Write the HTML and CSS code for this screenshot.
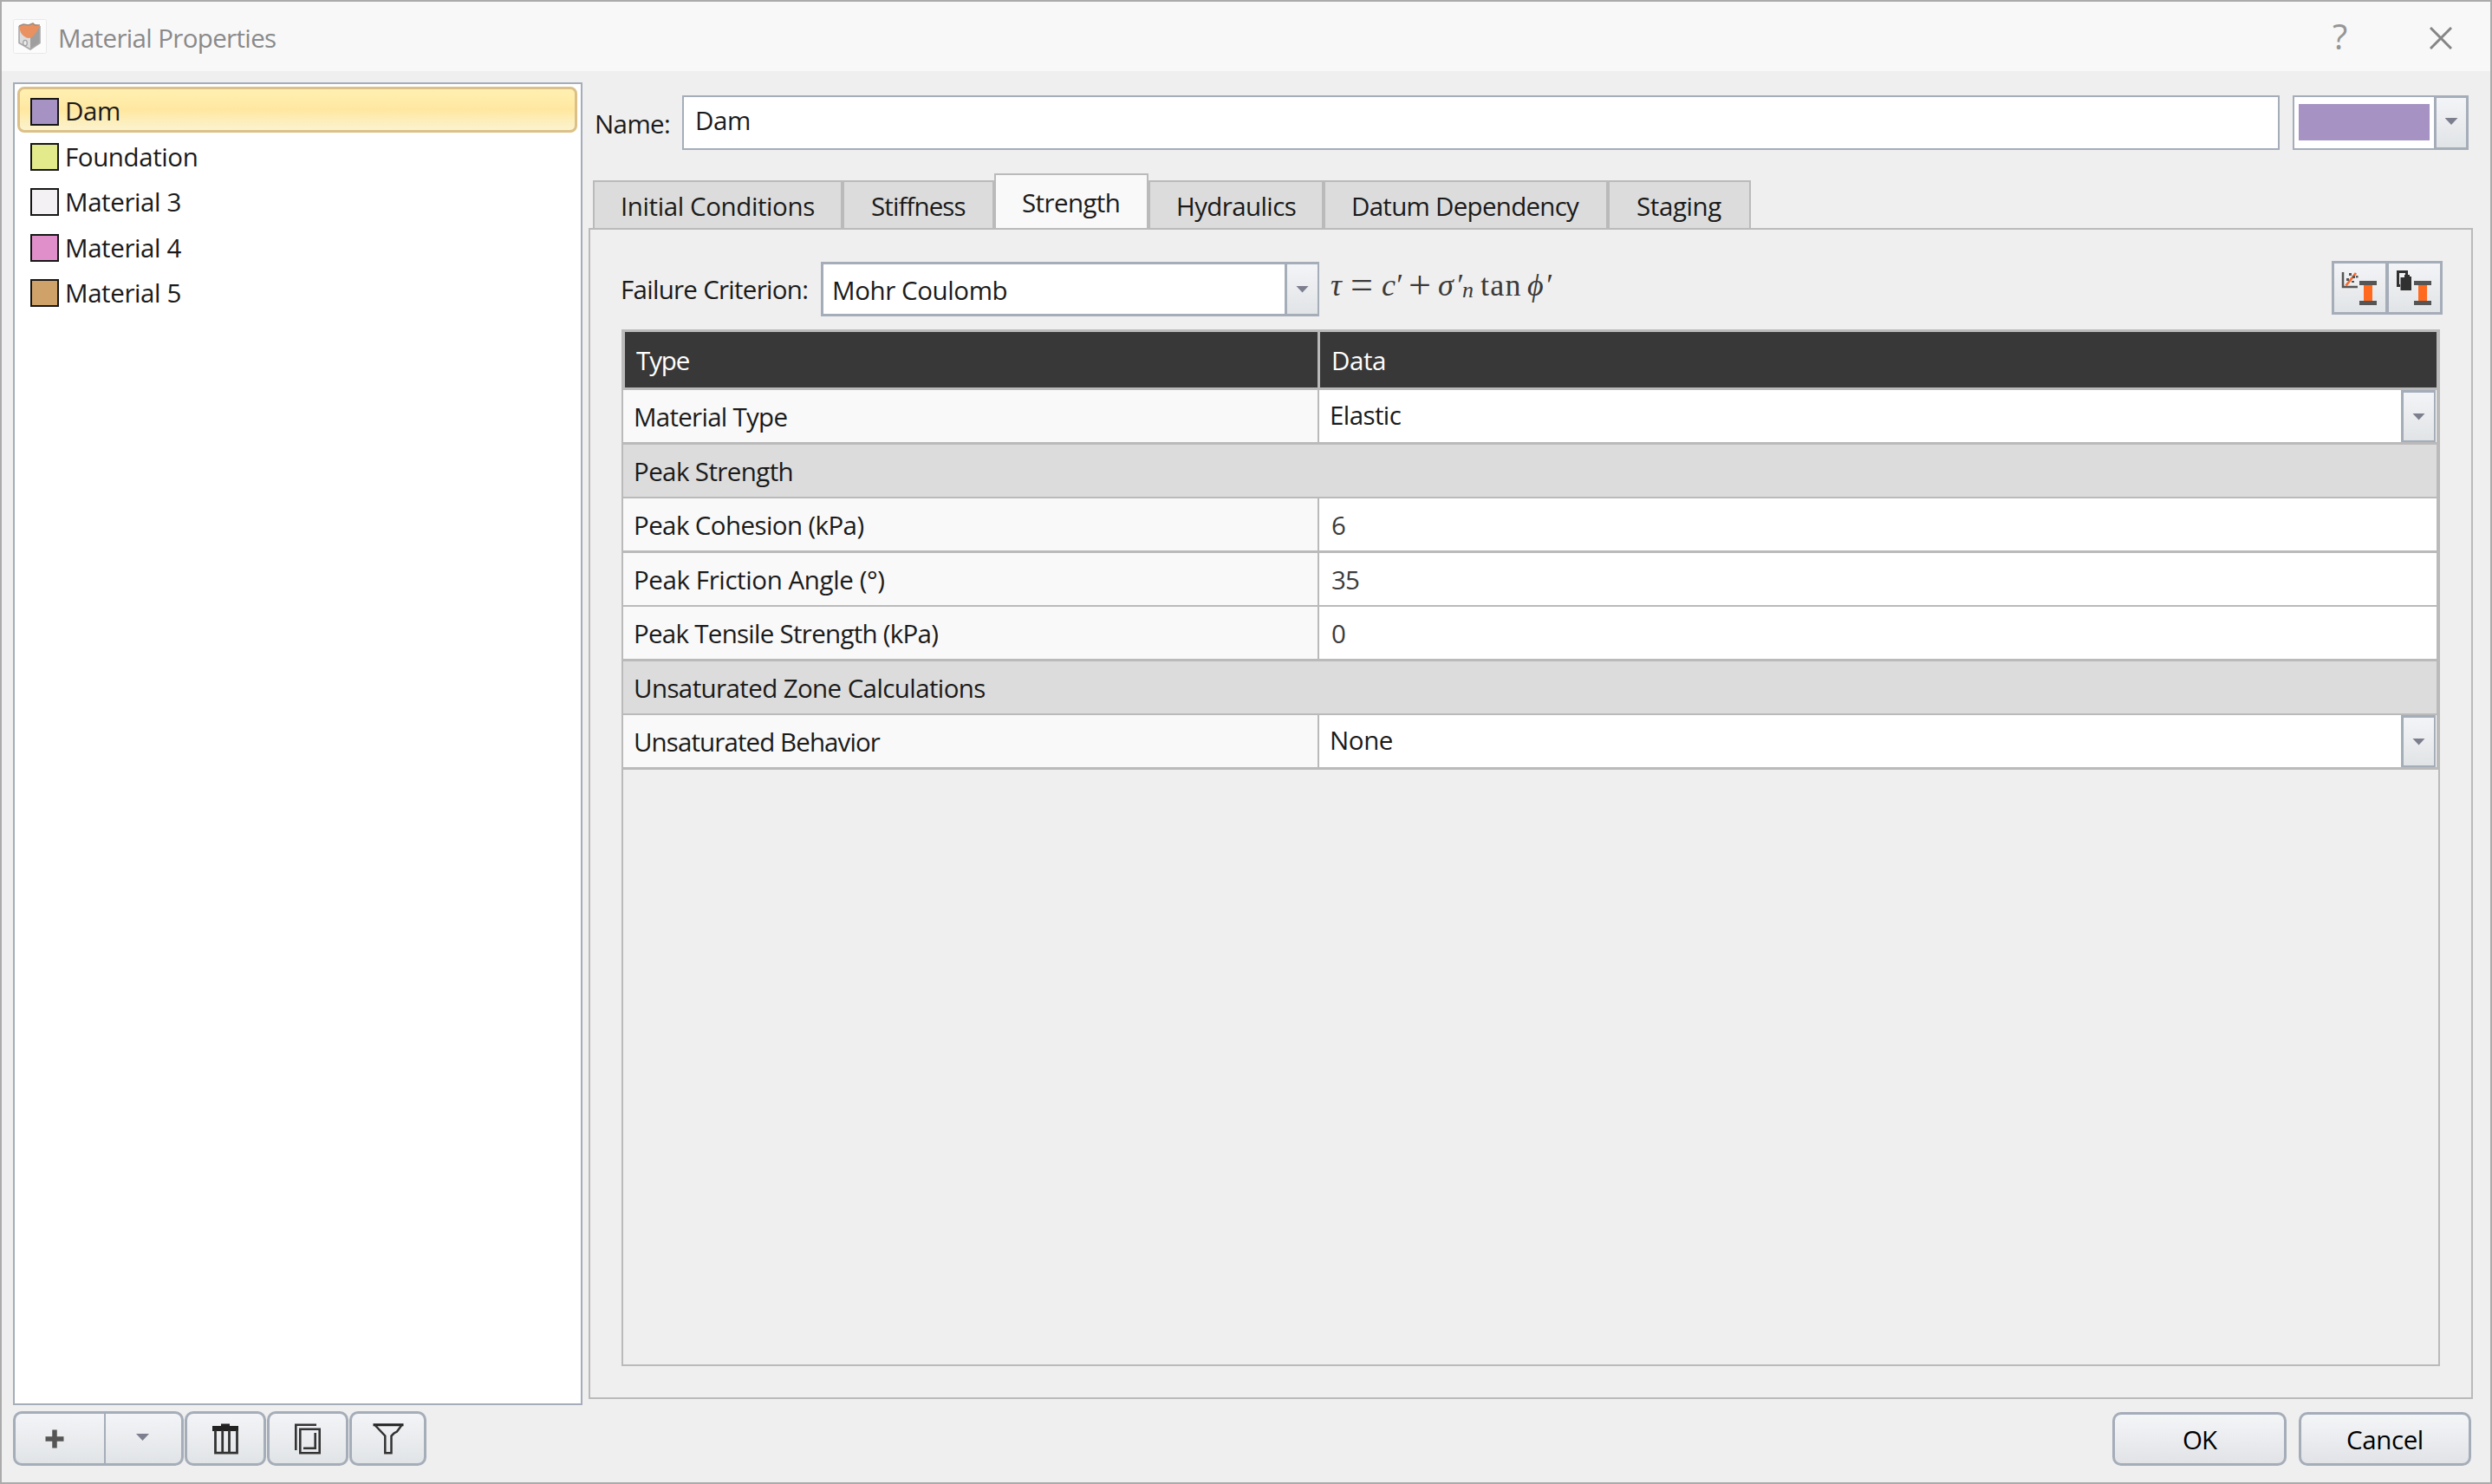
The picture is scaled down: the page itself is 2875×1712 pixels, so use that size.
FILE: index.html
```html
<!DOCTYPE html>
<html lang="en">
<head>
<meta charset="utf-8">
<title>Material Properties</title>
<link rel="stylesheet" href="styles.css">
</head>
<body>
<div class="dialog">
  <header class="titlebar">
    <svg class="app-icon" width="39" height="40" viewBox="0 0 39 40">
      <rect x=".5" y=".5" width="38" height="39" rx="2" fill="#fcfcfc" stroke="#e9e9e9"/>
      <path d="M7 8 20 12V35L7 27.500Z" fill="#dcdcdc"/>
      <path d="M31 8 20 14V35L31 27.500Z" fill="#9f9f9f"/>
      <path d="M7 8V27.500L20 35 31 27.500V8" fill="none" stroke="#a8a8a8" stroke-width="1.600"/>
      <path d="M7 8 12 6 18 7 23 5 31 8C29 11 27 16 23 20Q18 24 13 20 8 17 7 8Z" fill="#ea9161"/>
      <path d="M7 8 12 6 18 7 23 5 25 7 31 7" fill="none" stroke="#a08c80" stroke-width="1.500"/>
      <ellipse cx="14" cy="27.500" rx="2.300" ry="3.200" fill="#eee" stroke="#a2a2a2" stroke-width="1.300"/>
    </svg>
    <h1 class="title">Material Properties</h1>
    <span class="help">?</span>
    <svg class="close" width="26" height="26" viewBox="0 0 26 26"><path d="M1 1 25 25M25 1 1 25" stroke="#858585" stroke-width="3"/></svg>
  </header>

  <div class="content">
    <aside class="sidebar">
      <ul class="materials">
        <li class="material selected"><i class="swatch purple"></i><span class="tight-4">Dam</span></li>
        <li class="material"><i class="swatch lime"></i><span class="tight-4">Foundation</span></li>
        <li class="material"><i class="swatch white"></i><span class="tight-4">Material 3</span></li>
        <li class="material"><i class="swatch pink"></i><span class="tight-4">Material 4</span></li>
        <li class="material"><i class="swatch tan"></i><span class="tight-4">Material 5</span></li>
      </ul>
      <div class="toolbar">
        <div class="tool split">
          <button class="add"><svg width="22" height="22" viewBox="0 0 22 22"><path d="M11 .5V21.500M.5 11H21.500" stroke="#555" stroke-width="5.500"/></svg></button>
          <button class="more"><i class="arrow"></i></button>
        </div>
        <button class="tool">
          <svg width="36" height="38" viewBox="0 0 36 38"><path d="M3 4H13V1.500H23V4H33V10H3Z" fill="#222"/><path d="M6.500 9V35.200H31.500V9M14.700 9V35M22.500 9V35" fill="none" stroke="#333" stroke-width="2.800"/></svg>
        </button>
        <button class="tool">
          <svg width="36" height="38" viewBox="0 0 36 38"><path d="M28 2.800H4.300V32M9.300 7.800H31.700V35.200H9.300ZM26.700 12V29.800H13" fill="none" stroke="#333" stroke-width="2.600"/></svg>
        </button>
        <button class="tool narrow">
          <svg width="36" height="38" viewBox="0 0 36 38"><path d="M.5 2.800H35.500" stroke="#222" stroke-width="3"/><path d="M2.500 3 14.300 15.500V35.200H21.500V15.500L24.500 12.500 28 10.500 33.500 3" fill="none" stroke="#333" stroke-width="2.500"/></svg>
        </button>
      </div>
    </aside>

    <main class="editor">
      <div class="name-row">
        <label class="name-label tight-6">Name:</label>
        <div class="name-input tight-4">Dam</div>
        <div class="color-picker">
          <div class="color-well"><i class="color"></i></div>
          <button class="drop"><i class="arrow"></i></button>
        </div>
      </div>

      <nav class="tabs">
        <a class="tab initial tight-4">Initial Conditions</a>
        <a class="tab stiffness tight-9">Stiffness</a>
        <a class="tab strength active tight-6">Strength</a>
        <a class="tab hydraulics tight-6">Hydraulics</a>
        <a class="tab datum tight-7">Datum Dependency</a>
        <a class="tab staging tight-4">Staging</a>
      </nav>

      <section class="panel">
        <div class="criterion-row">
          <label class="criterion-label tight-7">Failure Criterion:</label>
          <div class="combo">
            <span class="combo-value tight-4">Mohr Coulomb</span>
            <button class="combo-drop"><i class="arrow"></i></button>
          </div>
          <div class="formula"><i class="tau">τ</i><span class="eq">=</span><i class="c">c</i><i class="prime">′</i><span class="plus">+</span><i class="sigma">σ</i><i class="prime2">′</i><i class="sub">n</i><span class="fn">tan</span><i class="phi">ϕ</i><i class="prime3">′</i></div>
          <div class="actions">
            <button class="action">
              <svg width="59" height="56" viewBox="0 0 59 56"><path d="M10 10V27H27" fill="none" stroke="#555" stroke-width="2.500"/><path d="M13.500 25.500 25 11" stroke="#f8692a" stroke-width="2.800"/><path d="M17 11h3v3h-3zM21 14h3v3h-3zM14 17h3v3h-3zM25 14h2.500v2.500h-2.500zM20 20h3v2h-3z" fill="#555"/><path d="M34 24H44V44H34Z" fill="#ff6a1f"/><path d="M29 20H49V25H29ZM29 43H49V48H29Z" fill="#555"/></svg>
            </button>
            <button class="action">
              <svg width="59" height="56" viewBox="0 0 59 56"><path d="M13 25.500H10.500V9.500H20.500V14" fill="none" stroke="#303030" stroke-width="3"/><path d="M18 13H24V15H26V31H13.500V16H18Z" fill="#303030"/><path d="M34 24H44V44H34Z" fill="#ff6a1f"/><path d="M29 20H49V25H29ZM29 43H49V48H29Z" fill="#555"/></svg>
            </button>
          </div>
        </div>

        <div class="grid">
          <div class="grid-head"><div class="head-cell type tight-10">Type</div><div class="head-cell tight-4">Data</div></div>
          <div class="row"><div class="key tight-7">Material Type</div><div class="value select"><span class="tight-6">Elastic</span><button class="cell-drop"><i class="arrow"></i></button></div></div>
          <div class="row group"><div class="key tight-6">Peak Strength</div></div>
          <div class="row"><div class="key tight-6">Peak Cohesion (kPa)</div><div class="value">6</div></div>
          <div class="row"><div class="key tight-4">Peak Friction Angle (°)</div><div class="value tight-9">35</div></div>
          <div class="row"><div class="key tight-7">Peak Tensile Strength (kPa)</div><div class="value">0</div></div>
          <div class="row group"><div class="key tight-6">Unsaturated Zone Calculations</div></div>
          <div class="row"><div class="key tight-9">Unsaturated Behavior</div><div class="value select"><span class="tight-4">None</span><button class="cell-drop"><i class="arrow"></i></button></div></div>
        </div>
      </section>

      <footer class="footer">
        <button class="push ok tight-10">OK</button>
        <button class="push tight-4">Cancel</button>
      </footer>
    </main>
  </div>
</div>
</body>
</html>
```
FILE: styles.css
```css
* { box-sizing: border-box; }

body {
  margin: 0;
  background: #efefef;
  color: #1a1a1a;
  font: 29.5px/40px "Open Sans", "Noto Sans", sans-serif;
  white-space: nowrap;
}

button {
  margin: 0;
  padding: 0;
  border: 0;
  background: none;
  color: #000;
  font: inherit;
  letter-spacing: inherit;
}

svg { display: block; }

.tight-4 { letter-spacing: -0.4px; }
.tight-6 { letter-spacing: -0.6px; }
.tight-7 { letter-spacing: -0.72px; }
.tight-9 { letter-spacing: -0.9px; }
.tight-10 { letter-spacing: -1.1px; }

.dialog {
  display: flex;
  flex-direction: column;
  width: 2875px;
  height: 1712px;
  border: 2px solid #ababab;
  background: #efefef;
}

.titlebar {
  display: flex;
  align-items: flex-start;
  height: 80px;
  padding: 20px 44px 0 13px;
  background: #f8f8f8;
}

.title {
  flex: 1;
  margin: 2px 0 0 13px;
  color: #8a8a8a;
  font-size: inherit;
  font-weight: 400;
  letter-spacing: -0.65px;
}

.help {
  width: 20px;
  margin: 0 92px 0 0;
  color: #969696;
  font-size: 40px;
  letter-spacing: 0;
}

.close { margin-top: 9px; }

.content {
  display: flex;
  flex: 1;
  padding: 0 20px 0 13px;
}

.sidebar {
  width: 657px;
  padding-top: 13px;
}

.materials {
  height: 1526px;
  margin: 0 0 7px;
  padding: 3px;
  border: 2px solid #a5adb9;
  background: #fff;
  list-style: none;
}

.material {
  display: flex;
  align-items: flex-start;
  height: 52.5px;
  padding: 12px 0 0 15px;
}

.material span { margin: -2px 0 0 7px; line-height: 36px; }

.selected {
  margin-right: 1px;
  padding: 10px 0 0 12px;
  border: 3px solid #dcc088;
  border-radius: 8px;
  background: linear-gradient(#fff0b0 0%, #ffecaa 25%, #ffe7a0 50%, #fdeeb8 75%, #fbf3cf 100%);
}

.selected span { margin-top: -3px; }

.swatch {
  width: 33px;
  height: 32px;
  border: 2.500px solid #161616;
}

.purple { background: #a692c3; }
.lime { background: #e2ea8b; }
.white { background: #f3f1f4; }
.pink { background: #e08fca; }
.tan { background: #cfa269; }

.toolbar {
  display: flex;
  gap: 1px;
  height: 63px;
}

.tool {
  display: flex;
  align-items: center;
  justify-content: center;
  width: 94px;
  height: 63px;
  border: 3px solid #a5adb9;
  border-radius: 10px;
  background: linear-gradient(#f3f4f7, #e1e4e6);
}

.split { width: 197px; }
.narrow { width: 89px; }

.split button {
  display: flex;
  align-items: center;
  justify-content: center;
  height: 100%;
}

.add { width: 104px; padding-right: 13px; border-right: 2px solid #a5adb9; }
.more { flex: 1; padding: 0 2px 3px 0; }

.arrow {
  width: 15px;
  height: 8px;
  background: #7d7f8f;
  clip-path: polygon(0 0, 100% 0, 50% 100%);
}

.editor {
  flex: 1;
  margin-left: 7px;
  padding-top: 28px;
}

.name-row {
  display: flex;
  height: 63px;
  padding-left: 7px;
}

.name-label { width: 101px; padding-top: 13px; }

.name-input {
  width: 1843px;
  margin-right: 15px;
  padding: 7px 0 0 13px;
  border: 2px solid #a5adb9;
  background: #fff;
}

.color-picker { display: flex; width: 203px; }

.color-well {
  flex: 1;
  padding: 8px 5px;
  border: solid #a5adb9;
  border-width: 2px 0 2px 2px;
  background: #fff;
}

.color {
  display: block;
  width: 151px;
  height: 42px;
  background: #a692c3;
}

.drop {
  display: flex;
  align-items: center;
  justify-content: center;
  width: 40px;
  border: 3px solid #a5adb9;
  background: linear-gradient(#f3f4f7, #e1e4e6);
}

.drop .arrow { margin-bottom: 3px; }

.tabs {
  display: flex;
  align-items: flex-end;
  height: 63px;
  margin: 27px 0 0 5px;
}

.tab {
  height: 55px;
  padding: 8px 0 0 30px;
  border: 2px solid #bababa;
  border-bottom: 0;
  background: #dcdcdc;
}

.tab.active { height: 63px; padding-top: 12px; background: #f9f9f9; }

.initial { width: 288px; }
.stiffness { width: 175px; padding-left: 31px; }
.strength { width: 178px; }
.hydraulics { width: 202px; }
.datum { width: 328px; }
.staging { width: 165px; padding-left: 31px; }

.panel {
  height: 1351px;
  padding: 37px 0 0 36px;
  border: 2px solid #bababa;
}

.criterion-row {
  display: flex;
  height: 63px;
}

.criterion-label { width: 231px; margin-left: -1px; padding-top: 12px; }

.combo {
  display: flex;
  width: 575px;
  border: 3px solid #a5adb9;
  border-right-width: 2px;
  background: #fff;
}

.combo-value { flex: 1; padding: 10px 0 0 10px; }

.combo-drop {
  display: flex;
  align-items: center;
  justify-content: center;
  width: 38px;
  border-left: 3px solid #a5adb9;
  background: linear-gradient(#f3f4f7, #e1e4e6);
}

.formula {
  display: flex;
  flex: 1;
  padding: 5px 0 0 13px;
  color: #3a3a3a;
  font: 36px/44px "Liberation Serif", serif;
}

.tau { width: 23px; }
.eq { width: 36px; font-size: 46px; }
.plus { width: 34px; font-size: 46px; }
.c { width: 15px; }
.prime, .prime3 { width: 16px; }
.prime2 { width: 8px; }
.sigma { width: 20px; }
.sub { width: 21px; padding-top: 6px; font-size: 26px; }
.fn { width: 54px; letter-spacing: 1.2px; }
.phi { width: 20px; }

.actions {
  display: flex;
  width: 128px;
  height: 62px;
  margin: -1px 33px 0 0;
  background: #a5adb9;
  gap: 4px;
  padding: 3px;
}

.action { width: 59px; height: 56px; background: linear-gradient(#f3f4f7, #e1e4e6); }

.grid {
  width: 2098px;
  height: 1196px;
  margin-top: 15px;
  border: 2px solid #bababa;
}

.grid-head {
  display: flex;
  gap: 3px;
  height: 68px;
  padding: 1px 2px 3px 2px;
  background: #bababa;
}

.head-cell {
  flex: 1;
  padding: 13px 0 0 13px;
  background: #383838;
  color: #fff;
}

.head-cell.type { flex: none; width: 799px; }

.row {
  display: flex;
  height: 62px;
  border: solid #bababa;
  border-width: 0 2px 2px 0;
}

.row:nth-child(even) { height: 63px; border-bottom-width: 3px; }
.row.group { background: #dcdcdc; }

.key {
  width: 803px;
  padding: 11px 0 0 12px;
  border-right: 2px solid #bababa;
  background: #f9f9f9;
}

.group .key { width: 100%; border: 0; background: none; }

.value {
  display: flex;
  flex: 1;
  padding: 11px 0 0 14px;
  background: #fff;
  color: #3b3b3b;
}

.value.select { padding: 0 1px 0 12px; color: #1a1a1a; }
.select span { flex: 1; padding-top: 9px; }

.cell-drop {
  display: flex;
  align-items: center;
  justify-content: center;
  width: 40px;
  border: 3px solid #a5adb9;
  border-right-width: 2px;
  border-bottom-width: 2px;
  background: linear-gradient(#f3f4f7, #e1e4e6);
}

.footer {
  display: flex;
  justify-content: flex-end;
  gap: 14px;
  margin-top: 15px;
  padding-right: 2px;
}

.push {
  width: 199px;
  height: 62px;
  padding-top: 2px;
  border: 3px solid #a5adb9;
  border-radius: 10px;
  background: linear-gradient(#f3f5f7, #e1e3e7);
}

.ok { width: 201px; }
```
